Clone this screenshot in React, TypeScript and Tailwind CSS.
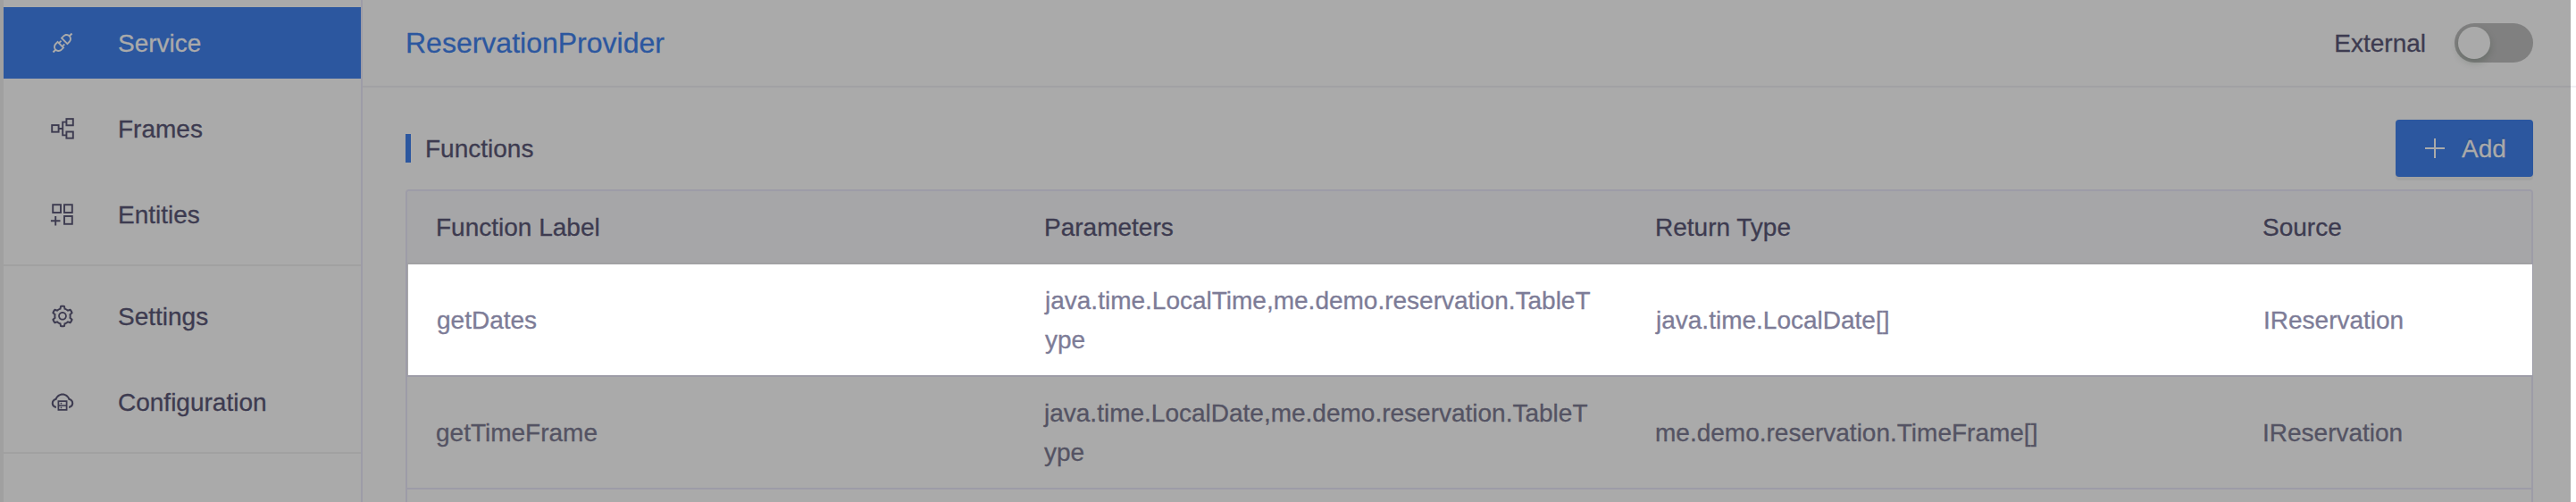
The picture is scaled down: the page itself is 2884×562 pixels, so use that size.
import type { ReactNode } from "react";
import { AiOutlineApi, AiOutlineCloudServer, AiOutlineSetting } from "react-icons/ai";

function FramesIcon() {
  return (
    <svg className="size-7" viewBox="0 0 28 28" fill="none" stroke="currentColor" strokeWidth="1.9">
      <rect x="2.2" y="10.1" width="7.4" height="7.6" />
      <rect x="18.4" y="3.1" width="7.4" height="7.2" />
      <rect x="18.4" y="17.5" width="7.4" height="7.2" />
      <path d="M10 14h4.2M18 6.6h-3.8v14.8H18" />
    </svg>
  );
}

function EntitiesIcon() {
  return (
    <svg className="size-7" viewBox="0 0 28 28" fill="none" stroke="currentColor" strokeWidth="1.9">
      <rect x="3.2" y="3.2" width="8.8" height="8.8" />
      <rect x="16" y="3.2" width="8.8" height="8.8" />
      <rect x="16" y="16" width="8.8" height="8.8" />
      <path d="M6.2 16v10.6M0.9 21.3h10.6" />
    </svg>
  );
}

type NavItemProps = { icon: ReactNode; label: string; active?: boolean };

function NavItem({ icon, label, active = false }: NavItemProps) {
  return (
    <a
      className={
        active
          ? "flex h-20 items-center bg-[#2c579f] pl-[52px] text-[#aaaaaa]"
          : "flex h-20 items-center pl-[52px] text-[#3d3b50]"
      }
    >
      <span className="mr-12 flex w-7 text-[28px]">{icon}</span>
      <span className="pt-0.5">{label}</span>
    </a>
  );
}

function Divider() {
  return <div className="h-0.5 bg-[#a1a1a1]" />;
}

type Row = { label: string; params: string[]; returns: string; source: string };

const rows: Row[] = [
  {
    label: "getDates",
    params: ["java.time.LocalTime,me.demo.reservation.TableT", "ype"],
    returns: "java.time.LocalDate[]",
    source: "IReservation",
  },
  {
    label: "getTimeFrame",
    params: ["java.time.LocalDate,me.demo.reservation.TableT", "ype"],
    returns: "me.demo.reservation.TimeFrame[]",
    source: "IReservation",
  },
];

function FunctionRow({ row, highlighted }: { row: Row; highlighted: boolean }) {
  return (
    <div
      className={
        highlighted
          ? "-mr-px ml-px grid h-[124px] grid-cols-[681px_684px_680px_1fr] items-center bg-white pt-0.5 pl-8 text-[#7d7c97]"
          : "grid h-[124px] grid-cols-[681px_684px_680px_1fr] items-center pt-0.5 pl-8 text-[#545363]"
      }
    >
      <div>{row.label}</div>
      <div className="leading-[44px]">
        {row.params.map((line) => (
          <div key={line}>{line}</div>
        ))}
      </div>
      <div>{row.returns}</div>
      <div>{row.source}</div>
    </div>
  );
}

export default function App() {
  return (
    <div className="flex h-[562px] w-[2884px] overflow-hidden bg-[#aaaaaa] font-['Liberation_Sans',Arial,sans-serif] text-[28px] leading-8 text-[#3d3b50] [-webkit-text-stroke:0.3px_currentColor]">
      <div className="w-1 shrink-0 bg-[#a0a0a0]" />
      <nav className="flex w-[402px] shrink-0 flex-col gap-4 border-r-2 border-[#9d9ca7] pt-2">
        <NavItem icon={<AiOutlineApi />} label="Service" active />
        <NavItem icon={<FramesIcon />} label="Frames" />
        <NavItem icon={<EntitiesIcon />} label="Entities" />
        <Divider />
        <NavItem icon={<AiOutlineSetting />} label="Settings" />
        <NavItem icon={<AiOutlineCloudServer />} label="Configuration" />
        <Divider />
      </nav>

      <main className="flex w-[2472px] shrink-0 flex-col">
        <header className="flex h-[98px] shrink-0 items-center justify-between border-b-2 border-[#a1a1a4] pr-[42px] pl-12">
          <h1 className="text-[32px] leading-9 text-[#2c579f]">ReservationProvider</h1>
          <div className="flex items-center">
            <span className="mr-8 pt-0.5">External</span>
            <button className="flex h-11 w-[88px] items-center rounded-full bg-[#808080] pl-1">
              <span className="size-9 rounded-full bg-[#aaaaaa] shadow-[0_4px_8px_rgba(0,35,11,0.2)]" />
            </button>
          </div>
        </header>

        <section className="flex shrink-0 flex-col pt-9 pr-[42px] pl-12">
          <div className="flex h-16 items-center justify-between">
            <h2 className="flex items-center">
              <span className="mr-4 h-8 w-1.5 bg-[#2c579f]" />
              <span className="pt-0.5">Functions</span>
            </h2>
            <button className="flex h-16 w-[154px] items-center rounded bg-[#2c579f] pl-8 text-[#aaaaaa] shadow-[0_4px_0_rgba(0,0,0,0.045)] [text-shadow:0_-2px_0_rgba(0,0,0,0.12)]">
              <svg className="mr-[18px] size-6" viewBox="0 0 24 24" fill="none" stroke="currentColor" strokeWidth="2">
                <path d="M12 1v22M1 12h22" />
              </svg>
              <span className="pt-0.5">Add</span>
            </button>
          </div>

          <div className="mt-3.5 h-[360px] rounded-t border-2 border-[#9d9ca7]">
            <div className="grid h-[82px] grid-cols-[681px_684px_680px_1fr] items-center rounded-t-sm border-b-2 border-[#a1a1a3] bg-[#a6a6a8] pt-0.5 pl-8">
              <div>Function Label</div>
              <div>Parameters</div>
              <div>Return Type</div>
              <div>Source</div>
            </div>
            {rows.map((row, index) => (
              <div key={row.label} className="border-b-2 border-[#9d9ca7]">
                <FunctionRow row={row} highlighted={index === 0} />
              </div>
            ))}
          </div>
        </section>
      </main>

      <div className="flex w-1.5 shrink-0 flex-col bg-white pt-24">
        <div className="h-0.5 bg-[#f0f0f4]" />
      </div>
    </div>
  );
}
